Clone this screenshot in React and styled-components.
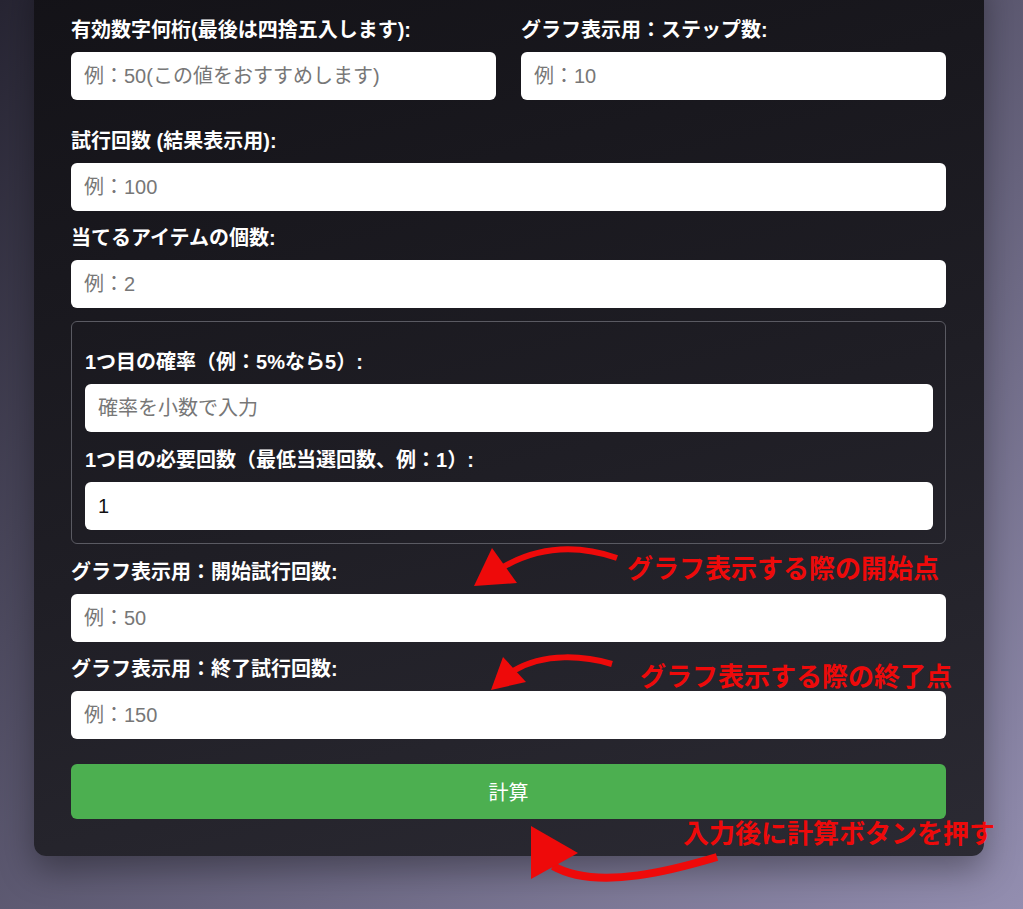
import React from 'react';
import styled, { createGlobalStyle } from 'styled-components';

const GlobalStyle = createGlobalStyle`
  html, body {
    margin: 0;
    padding: 0;
  }
  body {
    min-height: 100vh;
    background: linear-gradient(to bottom right, #272533, #938eb0);
    font-family: "Liberation Sans", "Noto Sans CJK JP", sans-serif;
  }
`;

const Page = styled.div`
  position: relative;
  display: flow-root;
  padding: 0 0 54px 34px;
`;

const Card = styled.form`
  width: 950px;
  box-sizing: border-box;
  margin-top: -30px;
  padding: 50px 38px 37px 37px;
  border-radius: 12px;
  background: linear-gradient(165deg, #131217 0%, #1f1e25 55%, #2b2a33 100%);
  box-shadow: 0 14px 34px rgba(0, 0, 0, 0.35);
`;

const TwoCols = styled.div`
  display: grid;
  grid-template-columns: 1fr 1fr;
  column-gap: 25px;
  margin-bottom: 31px;
`;

const Field = styled.div`
  margin-bottom: ${p => (p.$gap ?? 17)}px;
`;

const Label = styled.label`
  display: block;
  color: #fff;
  font-weight: 700;
  font-size: 20px;
  line-height: 20px;
  margin-bottom: 12px;
  white-space: nowrap;
`;

const Input = styled.input`
  display: block;
  width: 100%;
  box-sizing: border-box;
  height: 48px;
  border: none;
  border-radius: 6px;
  padding: 0 13px;
  background: #fff;
  color: #111;
  font-family: inherit;
  font-size: 20px;
  outline: none;

  &::placeholder {
    color: #777;
  }
`;

const ItemBox = styled.fieldset`
  margin: 0 0 18px;
  padding: 30px 12px 13px 13px;
  border: 1px solid #5a5a62;
  border-radius: 6px;
  min-width: 0;
`;

const SubmitButton = styled.button`
  display: block;
  width: 100%;
  height: 55px;
  border: none;
  border-radius: 6px;
  background: #4caf50;
  color: #fff;
  font-family: inherit;
  font-size: 20px;
  cursor: pointer;
`;

const Overlay = styled.div`
  position: absolute;
  top: 0;
  left: 0;
  width: 1023px;
  height: 909px;
  pointer-events: none;
`;

const Arrows = styled.svg`
  position: absolute;
  top: 0;
  left: 0;
`;

const Note = styled.span`
  position: absolute;
  left: ${p => p.$x}px;
  top: ${p => p.$y}px;
  color: #ee0a0a;
  font-family: "Noto Sans CJK JP", sans-serif;
  font-weight: 700;
  font-size: 26px;
  line-height: 26px;
  white-space: nowrap;
`;

const RED = '#ee0a0a';

function Annotations() {
  return (
    <Overlay>
      <Arrows width="1023" height="909" viewBox="0 0 1023 909">
        <path d="M617 558 C 585 547, 545 543, 503 567" fill="none" stroke={RED} strokeWidth="6" />
        <polygon points="474,586 492,548 517,583" fill={RED} />

        <path d="M612 664 C 585 656, 545 652, 513 671" fill="none" stroke={RED} strokeWidth="6" />
        <polygon points="491,690 503,657 526,682" fill={RED} />

        <path d="M717 857 C 680 868, 598 892, 553 866" fill="none" stroke={RED} strokeWidth="8" />
        <polygon points="531,826 578,853 531,879" fill={RED} />
      </Arrows>
      <Note $x={627} $y={554}>グラフ表示する際の開始点</Note>
      <Note $x={640} $y={662}>グラフ表示する際の終了点</Note>
      <Note $x={683} $y={819}>入力後に計算ボタンを押す</Note>
    </Overlay>
  );
}

export default function App() {
  return (
    <Page>
      <GlobalStyle />
      <Card onSubmit={e => e.preventDefault()}>
        <TwoCols>
          <Field $gap={0}>
            <Label>有効数字何桁(最後は四捨五入します):</Label>
            <Input placeholder="例：50(この値をおすすめします)" />
          </Field>
          <Field $gap={0}>
            <Label>グラフ表示用：ステップ数:</Label>
            <Input placeholder="例：10" />
          </Field>
        </TwoCols>

        <Field>
          <Label>試行回数 (結果表示用):</Label>
          <Input placeholder="例：100" />
        </Field>

        <Field $gap={13}>
          <Label>当てるアイテムの個数:</Label>
          <Input placeholder="例：2" />
        </Field>

        <ItemBox>
          <Field $gap={18}>
            <Label>1つ目の確率（例：5%なら5）:</Label>
            <Input placeholder="確率を小数で入力" />
          </Field>
          <Field $gap={0}>
            <Label>1つ目の必要回数（最低当選回数、例：1）:</Label>
            <Input defaultValue="1" />
          </Field>
        </ItemBox>

        <Field>
          <Label>グラフ表示用：開始試行回数:</Label>
          <Input placeholder="例：50" />
        </Field>

        <Field $gap={25}>
          <Label>グラフ表示用：終了試行回数:</Label>
          <Input placeholder="例：150" />
        </Field>

        <SubmitButton type="submit">計算</SubmitButton>
      </Card>
      <Annotations />
    </Page>
  );
}
